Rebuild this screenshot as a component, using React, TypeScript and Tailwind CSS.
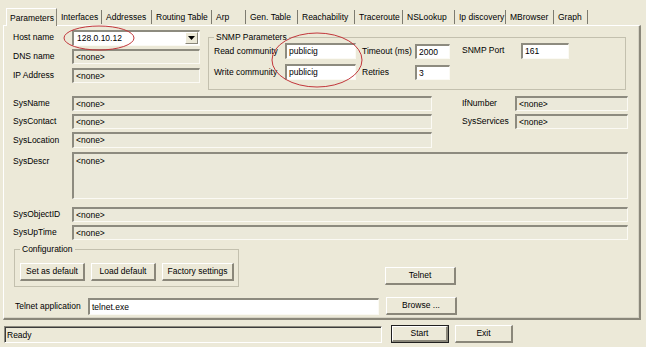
import React from "react";

const tabs: [string, number][] = [
  ["Interfaces", 45],
  ["Addresses", 50],
  ["Routing Table", 60],
  ["Arp", 34],
  ["Gen. Table", 52],
  ["Reachability", 57],
  ["Traceroute", 48],
  ["NSLookup", 52],
  ["Ip discovery", 51],
  ["MBrowser", 48],
  ["Graph", 34],
];

function Field({
  w,
  h = 15,
  white = false,
  children,
}: {
  w: number;
  h?: number;
  white?: boolean;
  children?: React.ReactNode;
}) {
  return (
    <div
      style={{ width: w, height: h }}
      className={`shrink-0 border-t-2 border-l-2 border-b border-r border-t-[#8d8b7f] border-l-[#8d8b7f] border-b-[#fbfaf4] border-r-[#fbfaf4] pl-[2px] leading-[12px] overflow-hidden ${
        white ? "bg-white" : "bg-[#ebe9da]"
      }`}
    >
      {children}
    </div>
  );
}

function Btn({
  w,
  children,
  def = false,
}: {
  w: number;
  children: React.ReactNode;
  def?: boolean;
}) {
  return (
    <div
      style={{ width: w }}
      className={`shrink-0 h-[18px] ${def ? "border border-[#202020]" : ""}`}
    >
      <div className="h-full border-t border-l border-b-2 border-r-2 border-t-white border-l-white border-b-[#8a877a] border-r-[#8a877a] bg-[#ece9d8] flex items-center justify-center">
        {children}
      </div>
    </div>
  );
}

function Label({ w, children }: { w: number; children: React.ReactNode }) {
  return (
    <div style={{ width: w }} className="shrink-0 whitespace-nowrap">
      {children}
    </div>
  );
}

export default function App() {
  return (
    <div
      className="relative w-[646px] h-[347px] bg-[#ece9d8] text-black text-[8.5px] overflow-hidden"
      style={{ fontFamily: '"Liberation Sans", Arial, sans-serif' }}
    >
      {/* Tabs */}
      <div className="flex pt-[8px] pl-[6px] h-[26px]">
        <div className="w-[51px] h-[18px] border-t border-l border-r border-t-white border-l-white border-r-[#8a877a] bg-[#ece9d8] pl-[3px] pt-[3px] relative z-10">
          Parameters
        </div>
        {tabs.map(([t, w]) => (
          <div
            key={t}
            style={{ width: w }}
            className="h-[18px] pt-[4px] pl-[4px] whitespace-nowrap"
          >
            <div className="flex h-[14px] -mt-[2px] items-center">
              <span className="grow pt-[1px]">{t}</span>
              <span className="w-px h-[14px] bg-[#7d7b70]" />
            </div>
          </div>
        ))}
      </div>

      {/* Panel */}
      <div className="ml-[3px] -mt-[1px] w-[638px] h-[295px] border-t border-l border-t-white border-l-white border-b-2 border-r-2 border-b-[#8a877a] border-r-[#8a877a] bg-[#ece9d8]">
        <div className="h-full border-b border-r border-b-[#d7d4c5] border-r-[#d7d4c5] pl-[9px]">
          {/* Top section */}
          <div className="flex pt-[4px]">
            <div className="flex flex-col gap-[4px]">
              <div className="flex items-center h-[15px]">
                <Label w={59}>Host name</Label>
                <div className="w-[128px] h-[16px] border-t-2 border-l-2 border-b border-r border-t-[#8d8b7f] border-l-[#8d8b7f] border-b-[#fbfaf4] border-r-[#fbfaf4] bg-white flex items-center">
                  <span className="grow pl-[3px]">128.0.10.12</span>
                  <div className="w-[13px] h-[12px] mr-[1px] border-t border-l border-b border-r border-t-white border-l-white border-b-[#8a877a] border-r-[#8a877a] bg-[#ece9d8] flex items-center justify-center">
                    <svg width="7" height="4" viewBox="0 0 7 4">
                      <path d="M0 0H7L3.5 4Z" fill="#000" />
                    </svg>
                  </div>
                </div>
              </div>
              <div className="flex items-center">
                <Label w={59}>DNS name</Label>
                <Field w={128}>&lt;none&gt;</Field>
              </div>
              <div className="flex items-center">
                <Label w={59}>IP Address</Label>
                <Field w={128}>&lt;none&gt;</Field>
              </div>
            </div>

            {/* SNMP group */}
            <div className="ml-[8px] mt-[7px] w-[418px] h-[53px] border border-[#c3c0ae] relative">
              <div className="absolute -top-[6px] left-[5px] px-[2px] bg-[#ece9d8] leading-[10px]">
                SNMP Parameters
              </div>
              <div className="flex pt-[5px] pl-[5px]">
                <div className="flex flex-col gap-[5px]">
                  <div className="flex items-center">
                    <Label w={71}>Read community</Label>
                    <Field w={71} h={16} white>
                      publicig
                    </Field>
                  </div>
                  <div className="flex items-center">
                    <Label w={71}>Write community</Label>
                    <Field w={71} h={16} white>
                      publicig
                    </Field>
                  </div>
                </div>
                <div className="flex flex-col gap-[5px] ml-[6px]">
                  <div className="flex items-center h-[16px]">
                    <Label w={53}>Timeout (ms)</Label>
                    <Field w={35} h={15} white>
                      2000
                    </Field>
                  </div>
                  <div className="flex items-center h-[16px]">
                    <Label w={53}>Retries</Label>
                    <Field w={35} h={15} white>
                      3
                    </Field>
                  </div>
                </div>
                <div className="flex items-start ml-[12px]">
                  <Label w={59}>
                    <div className="pt-[1px]">SNMP Port</div>
                  </Label>
                  <Field w={48} h={16} white>
                    161
                  </Field>
                </div>
              </div>
            </div>
          </div>

          {/* Sys rows */}
          <div className="flex mt-[6px]">
            <div className="flex flex-col gap-[3px]">
              <div className="flex items-center">
                <Label w={59}>SysName</Label>
                <Field w={360}>&lt;none&gt;</Field>
              </div>
              <div className="flex items-center">
                <Label w={59}>SysContact</Label>
                <Field w={360}>&lt;none&gt;</Field>
              </div>
              <div className="flex items-center">
                <Label w={59}>SysLocation</Label>
                <Field w={360} h={16}>
                  &lt;none&gt;
                </Field>
              </div>
            </div>
            <div className="flex flex-col gap-[3px] ml-[30px]">
              <div className="flex items-center">
                <Label w={53}>IfNumber</Label>
                <Field w={113}>&lt;none&gt;</Field>
              </div>
              <div className="flex items-center">
                <Label w={53}>SysServices</Label>
                <Field w={113}>&lt;none&gt;</Field>
              </div>
            </div>
          </div>

          <div className="flex items-start mt-[4px]">
            <Label w={59}>
              <div className="pt-[3px]">SysDescr</div>
            </Label>
            <Field w={556} h={47}>
              <div className="pt-[1px]">&lt;none&gt;</div>
            </Field>
          </div>

          <div className="flex flex-col gap-[3px] mt-[8px]">
            <div className="flex items-center">
              <Label w={59}>SysObjectID</Label>
              <Field w={556}>&lt;none&gt;</Field>
            </div>
            <div className="flex items-center">
              <Label w={59}>SysUpTime</Label>
              <Field w={556}>&lt;none&gt;</Field>
            </div>
          </div>

          {/* Configuration + Telnet */}
          <div className="flex items-end mt-[9px]">
            <div className="ml-[1px] w-[225px] h-[38px] border border-[#c3c0ae] relative">
              <div className="absolute -top-[6px] left-[5px] px-[2px] bg-[#ece9d8] leading-[10px]">
                Configuration
              </div>
              <div className="flex gap-[6px] pl-[5px] pt-[13px]">
                <Btn w={65}>Set as default</Btn>
                <Btn w={65}>Load default</Btn>
                <Btn w={72}>Factory settings</Btn>
              </div>
            </div>
            <div className="ml-[146px] mb-[2px]">
              <Btn w={71}>Telnet</Btn>
            </div>
          </div>

          <div className="flex items-center mt-[10px] pl-[2px]">
            <Label w={73}>Telnet application</Label>
            <Field w={291} h={17} white>
              <div className="pt-[1px]">telnet.exe</div>
            </Field>
            <div className="ml-[7px]">
              <Btn w={71}>Browse ...</Btn>
            </div>
          </div>
        </div>
      </div>

      {/* Status row */}
      <div className="flex items-center mt-[5px] pl-[4px]">
        <div className="w-[378px] h-[17px] border-t border-l border-b border-r border-t-[#8d8b7f] border-l-[#8d8b7f] border-b-white border-r-white">
          <div className="h-full border-t border-l border-t-[#3c3c3c] border-l-[#3c3c3c] pl-[1px] leading-[14px]">
            Ready
          </div>
        </div>
        <div className="ml-[9px]">
          <Btn w={58} def>
            Start
          </Btn>
        </div>
        <div className="ml-[6px]">
          <Btn w={58}>Exit</Btn>
        </div>
      </div>

      {/* Red annotation ellipses */}
      <svg
        className="absolute left-0 top-0 pointer-events-none"
        width="646"
        height="347"
      >
        <ellipse
          cx="99"
          cy="38"
          rx="35"
          ry="12"
          fill="none"
          stroke="#c2373c"
          strokeWidth="1"
        />
        <ellipse
          cx="317"
          cy="60"
          rx="45"
          ry="27"
          fill="none"
          stroke="#c2373c"
          strokeWidth="1"
        />
      </svg>
    </div>
  );
}
